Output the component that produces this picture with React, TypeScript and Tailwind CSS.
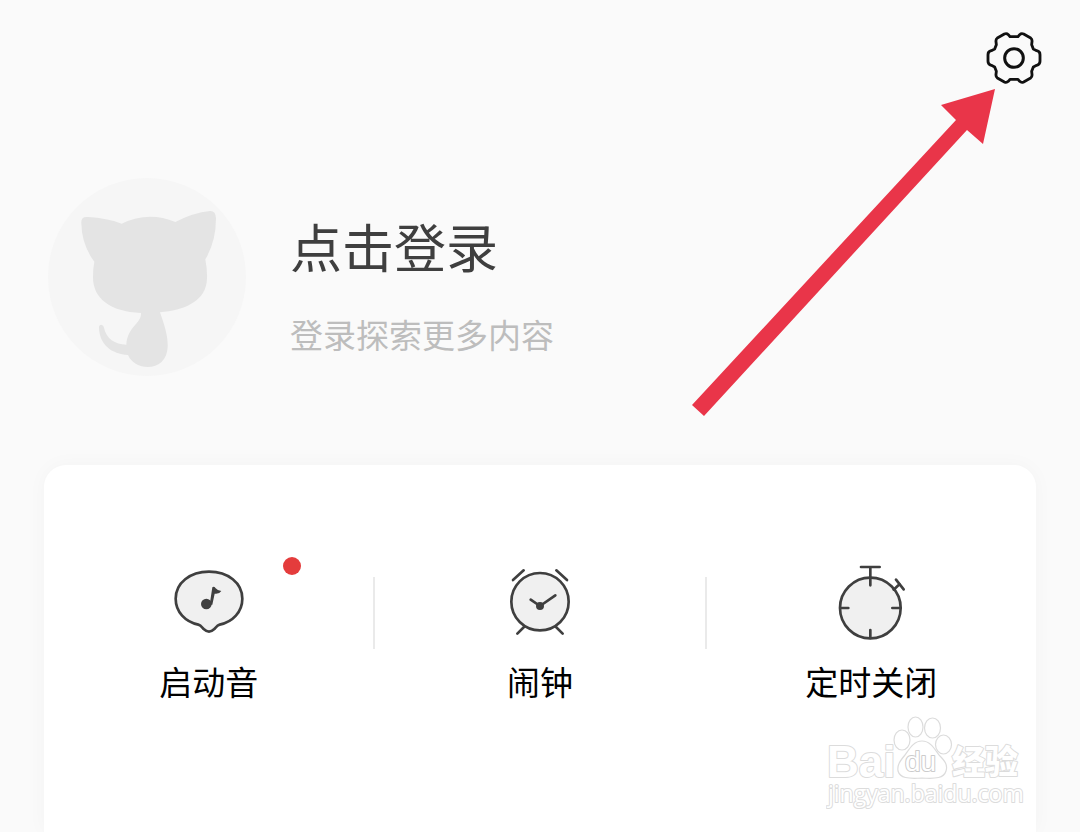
import type { ReactNode } from "react";

const INK = "#3f3f3f";

function GearIcon() {
  return (
    <svg viewBox="72 54 180 180" className="size-15" fill="none" stroke="#111111" strokeLinejoin="round" aria-hidden="true">
      <path
        strokeWidth="8.5"
        d="M150 80H174L179 74Q184 69 191 72L212 84Q217 88 216 95L215 104L220 117L230 122Q240 124 240 134V154Q240 164 230 166L220 171L215 184L216 193Q217 200 212 204L191 216Q184 219 179 214L174 208H150L145 214Q140 219 133 216L112 204Q107 200 108 193L109 184L104 171L94 166Q84 164 84 154V134Q84 124 94 122L104 117L109 104L108 95Q107 88 112 84L133 72Q140 69 145 74Z"
      />
      <circle cx="162" cy="144" r="28" strokeWidth="9" />
    </svg>
  );
}

function CatAvatar() {
  return (
    <svg viewBox="24 24 594 594" className="size-[198px] shrink-0" aria-hidden="true">
      <circle cx="321" cy="321" r="297" fill="#f6f6f6" />
      <path
        fill="#e4e4e4"
        d="M124 160Q122 138 145 141Q200 144 245 161Q325 122 406 156Q460 128 510 123Q527 122 528 145Q528 215 496 268Q502 300 501 325C500 395 430 422 360 427C375 470 384 500 383 530C382 570 355 591 323 591C298 590 275 580 264 555C215 552 178 525 177 472Q177 464 184 464Q191 465 192 473C198 505 225 523 259 524C262 470 305 460 303 429C210 425 158 385 159 320Q159 295 163 275Q125 225 124 160Z"
      />
    </svg>
  );
}

function SoundIcon() {
  return (
    <svg viewBox="57 45 240 240" className="size-20" aria-hidden="true">
      <path
        fill="#f0f0f0"
        stroke={INK}
        strokeWidth="8"
        strokeLinejoin="round"
        d="M177 65C234 65 277 99 277 146C277 186 248 215 209 224C201 226 198 232 192 238Q177 252 162 238C156 232 153 226 145 224C106 215 77 186 77 146C77 99 120 65 177 65Z"
      />
      <circle cx="169" cy="162" r="16" fill={INK} />
      <path d="M179 164L187 112Q192 108 197 115Q202 122 214 123Q208 133 194 131L187 164Z" fill={INK} />
    </svg>
  );
}

function AlarmIcon() {
  return (
    <svg viewBox="30 45 240 240" className="size-20" fill="none" stroke={INK} strokeWidth="8" strokeLinecap="round" strokeLinejoin="round" aria-hidden="true">
      <path d="M105 228L82 251M195 228L218 251M69 90L101 61M199 61L231 90" />
      <circle cx="150" cy="155" r="86" fill="#f0f0f0" />
      <path d="M122 149L150 168L196 136" />
      <circle cx="150" cy="168" r="8" fill={INK} />
    </svg>
  );
}

function TimerIcon() {
  return (
    <svg viewBox="122 45 240 240" className="size-20" fill="none" stroke={INK} strokeWidth="8" strokeLinecap="round" aria-hidden="true">
      <circle cx="240" cy="174" r="91" fill="#f0f0f0" />
      <path d="M212 51H268M240 51V106M240 240V264M150 174H174M306 174H330M310 119L328 102M317 89L340 118" />
    </svg>
  );
}

function Arrow() {
  return (
    <svg viewBox="692 89 303 328" className="pointer-events-none absolute top-[89px] right-[85px] h-[328px] w-[303px]" aria-hidden="true">
      <path d="M995 89L983 144L967 130L704 416L692 405L956 120L941 105Z" fill="#e93549" />
    </svg>
  );
}

function Watermark() {
  return (
    <svg
      viewBox="826 712 200 100"
      className="pointer-events-none absolute top-[247px] right-[10px] h-[100px] w-[200px]"
      fill="#ffffff"
      stroke="#dcdcdc"
      strokeLinejoin="round"
      role="img"
      aria-label="Baidu 经验"
    >
      <g strokeWidth="1.2">
        <ellipse cx="902" cy="740" rx="8" ry="10" />
        <ellipse cx="915.5" cy="727" rx="7.5" ry="10" />
        <ellipse cx="932.5" cy="728" rx="8" ry="10" />
        <ellipse cx="943.5" cy="744.5" rx="8" ry="9.5" />
        <path d="M922 741C930 741 934 748 939 755C945 761 948 765 946 771C944 778 936 779 922 778C908 779 900 778 898 771C897 765 900 761 905 755C910 748 914 741 922 741Z" />
      </g>
      <g strokeWidth="2" paintOrder="stroke">
        <text x="827" y="777" fontFamily="Liberation Sans, sans-serif" fontWeight="700" fontSize="44">Bai</text>
        <text x="905" y="771" fontFamily="Liberation Sans, sans-serif" fontWeight="400" fontSize="28" stroke="#cccccc">du</text>
        <text x="952" y="774" fontFamily="Noto Sans CJK SC, sans-serif" fontWeight="900" fontSize="33">经验</text>
        <text x="828" y="802" fontFamily="Open Sans, sans-serif" fontWeight="400" fontSize="23">jingyan.baidu.com</text>
      </g>
    </svg>
  );
}

function Shortcut({ label, badge, children }: { label: string; badge?: boolean; children: ReactNode }) {
  return (
    <button type="button" className="flex flex-1 flex-col items-center gap-3 text-black">
      <span className="relative">
        {children}
        {badge && <span className="absolute -top-2 left-[114px] size-[18px] rounded-full bg-[#e43c3c]" />}
      </span>
      <span className="text-[33px] leading-12">{label}</span>
    </button>
  );
}

function Divider() {
  return <span className="mt-3 h-18 w-0.5 bg-[#eaeaea]" />;
}

export default function App() {
  return (
    <div className="relative flex min-h-screen flex-col bg-[#fafafa] font-['Noto_Sans_CJK_SC',sans-serif] font-normal">
      <header className="flex justify-end px-9 pt-7">
        <button type="button" aria-label="设置">
          <GearIcon />
        </button>
      </header>

      <a href="#login" className="mt-[90px] flex gap-11 px-12">
        <CatAvatar />
        <span className="flex flex-col gap-8 pt-9">
          <span className="text-[52px] leading-16 text-[#3f3f3f]">点击登录</span>
          <span className="text-[33px] leading-12 text-[#bdbdbd]">登录探索更多内容</span>
        </span>
      </a>

      <main className="relative mx-11 mt-[89px] flex-1 rounded-t-[22px] bg-white pt-25 shadow-[0_0_20px_rgba(0,0,0,0.03)]">
        <nav className="flex items-start">
          <Shortcut label="启动音" badge>
            <SoundIcon />
          </Shortcut>
          <Divider />
          <Shortcut label="闹钟">
            <AlarmIcon />
          </Shortcut>
          <Divider />
          <Shortcut label="定时关闭">
            <TimerIcon />
          </Shortcut>
        </nav>
        <Watermark />
      </main>

      <Arrow />
    </div>
  );
}
